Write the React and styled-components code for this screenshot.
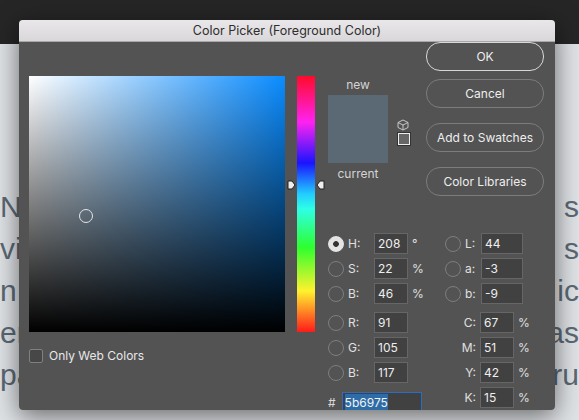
import React from 'react';
import styled, { createGlobalStyle } from 'styled-components';

const Global = createGlobalStyle`
  html, body { margin: 0; padding: 0; }
  body { width: 579px; height: 420px; overflow: hidden; background: #e0e3e6; font-family: Inter, "Liberation Sans", sans-serif; }
`;

const Page = styled.div`
  position: relative;
  width: 579px;
  height: 420px;
  overflow: hidden;
`;

const TopBar = styled.div`
  height: 44px;
  background: #262626;
`;

const BackText = styled.div`
  padding-top: 142px;
  display: flex;
  flex-direction: column;
`;

const BackLine = styled.div`
  height: 42px;
  display: flex;
  justify-content: space-between;
  font-family: "Liberation Sans", sans-serif;
  font-size: 30px;
  line-height: 42px;
  color: #5b6975;
  white-space: nowrap;
  padding: 0 0 0 0;
`;

const Dialog = styled.div`
  position: absolute;
  left: 19px;
  top: 20px;
  width: 536px;
  height: 390px;
  background: #535353;
  border-radius: 4px;
  overflow: hidden;
  display: flex;
  flex-direction: column;
`;

const DialogShadow = styled.div`
  position: absolute;
  left: 19px;
  top: 20px;
  width: 536px;
  height: 390px;
  border-radius: 4px;
  box-shadow: 0 6px 26px rgba(0, 0, 0, 0.55);
`;

const TitleBar = styled.div`
  height: 21px;
  flex: none;
  background: linear-gradient(#e9e7e9, #d9d7d9);
  border-bottom: 1px solid #a9a9a9;
  color: #2e2e2e;
  font-size: 12.5px;
  line-height: 22px;
  text-align: center;
`;

const Body = styled.div`
  flex: 1;
  display: flex;
  padding: 10px 10px 0 10px;
`;

const LeftCol = styled.div`
  width: 256px;
  padding-top: 24px;
  display: flex;
  flex-direction: column;
`;

const Field2D = styled.div`
  position: relative;
  width: 256px;
  height: 256px;
  background:
    linear-gradient(to bottom, rgba(0, 0, 0, 0), #000),
    linear-gradient(to right, #fff, #0a8cff);
`;

const Handle = styled.div`
  position: absolute;
  left: 50px;
  top: 133px;
  width: 12px;
  height: 12px;
  border-radius: 50%;
  border: 1px solid #e6e6e6;
  box-sizing: content-box;
`;

const CheckRow = styled.label`
  margin-top: 16px;
  display: flex;
  align-items: center;
  gap: 6px;
  color: #e8e8e8;
  font-size: 12px;
`;

const CheckBox = styled.span`
  width: 12px;
  height: 12px;
  border: 1px solid #808080;
  border-radius: 2px;
  background: #474747;
`;

const HueCol = styled.div`
  position: relative;
  width: 19px;
  height: 256px;
  margin: 24px 0 0 12px;
  background: linear-gradient(
    to bottom,
    #ff0a2a 0%,
    #ff22f0 18%,
    #1a14ff 34%,
    #22ccff 46%,
    #2effe6 52%,
    #2eff2e 67%,
    #fff22e 84%,
    #ff1a1a 100%
  );
`;

const Marker = styled.svg`
  position: absolute;
  top: 104px;
  ${(p) => (p.$side === 'left' ? 'left: -10px;' : 'right: -10px;')}
`;

const RightCol = styled.div`
  margin-left: 13px;
  display: flex;
  flex-direction: column;
`;

const TopRow = styled.div`
  display: flex;
  height: 179px;
`;

const PreviewCol = styled.div`
  width: 98px;
  padding-top: 25px;
  display: flex;
`;

const Preview = styled.div`
  width: 60px;
  display: flex;
  flex-direction: column;
  align-items: center;
  color: #d4d4d4;
  font-size: 12px;
  line-height: 16px;
`;

const Swatch = styled.div`
  width: 60px;
  height: 68px;
  margin: 2px 0 3px;
  background: #5b6975;
`;

const GamutIcons = styled.div`
  margin: 42px 0 0 9px;
  display: flex;
  flex-direction: column;
  gap: 2px;
`;

const WebSwatch = styled.div`
  width: 10px;
  height: 10px;
  background: #676767;
  border: 1px solid #eee;
  outline: 1px solid #333;
  margin-left: 1px;
`;

const Buttons = styled.div`
  width: 118px;
  padding-top: -10px;
  margin-top: -10px;
  display: flex;
  flex-direction: column;
`;

const Btn = styled.div`
  height: 27px;
  margin-top: ${(p) => p.$gap}px;
  border-radius: 14px;
  border: 1px solid ${(p) => (p.$primary ? '#d8d8d8' : '#7c7c7c')};
  color: #eee;
  font-size: 12px;
  line-height: 27px;
  text-align: center;
`;

const Fields = styled.div`
  display: flex;
`;

const FieldCol = styled.div`
  width: ${(p) => p.$w}px;
  display: flex;
  flex-direction: column;
`;

const Row = styled.div`
  height: 25px;
  margin-top: ${(p) => p.$gap || 0}px;
  display: flex;
  align-items: center;
`;

const Radio = styled.span`
  width: 14px;
  height: 14px;
  border-radius: 50%;
  flex: none;
  box-sizing: content-box;
  ${(p) =>
    p.$on
      ? 'background: radial-gradient(circle, #333 0 2.5px, #e4e4e4 3.2px); border: 1px solid #e4e4e4;'
      : 'border: 1px solid #7e7e7e;'}
`;

const Label = styled.span`
  width: ${(p) => p.$w || 30}px;
  flex: none;
  padding-left: ${(p) => (p.$flush ? 0 : 4)}px;
  text-align: ${(p) => (p.$flush ? 'right' : 'left')};
  padding-right: ${(p) => (p.$flush ? 4 : 0)}px;
  color: #e0e0e0;
  font-size: 12px;
  box-sizing: border-box;
`;

const Input = styled.span`
  width: ${(p) => p.$w}px;
  height: 21px;
  box-sizing: border-box;
  flex: none;
  padding-left: 3px;
  background: #414141;
  border: 1px solid #666;
  color: #eee;
  font-size: 12px;
  line-height: 19px;
`;

const Unit = styled.span`
  margin-left: 4px;
  color: #e0e0e0;
  font-size: 12px;
`;

const HexRow = styled.div`
  margin-top: 7px;
  height: 21px;
  display: flex;
  align-items: center;
  color: #d8d8d8;
  font-size: 12px;
  gap: 6px;
`;

const HexInput = styled.span`
  width: 80px;
  height: 21px;
  box-sizing: border-box;
  padding: 1px 0 0 2px;
  background: #414141;
  border: 1px solid #2c6cc4;
  line-height: 17px;
`;

const Selected = styled.span`
  display: inline-block;
  background: #2e6ca8;
  color: #f2f2f2;
`;

const hsb = [
  ['H:', '208', '°', true],
  ['S:', '22', '%'],
  ['B:', '46', '%'],
];
const rgb = [
  ['R:', '91'],
  ['G:', '105'],
  ['B:', '117'],
];
const lab = [
  ['L:', '44'],
  ['a:', '-3'],
  ['b:', '-9'],
];
const cmyk = [
  ['C:', '67'],
  ['M:', '51'],
  ['Y:', '42'],
  ['K:', '15'],
];
const backLines = [
  ['N', 's'],
  ['vic', 's'],
  ['n', 'ic'],
  ['en', 'as'],
  ['pa', 'ru'],
];

export default function App() {
  return (
    <Page>
      <Global />
      <TopBar />
      <BackText>
        {backLines.map(([l, r], i) => (
          <BackLine key={i}>
            <span>{l}</span>
            <span>{r}</span>
          </BackLine>
        ))}
      </BackText>
      <DialogShadow />
      <Dialog>
        <TitleBar>Color Picker (Foreground Color)</TitleBar>
        <Body>
          <LeftCol>
            <Field2D>
              <Handle />
            </Field2D>
            <CheckRow>
              <CheckBox />
              Only Web Colors
            </CheckRow>
          </LeftCol>
          <HueCol>
            <Marker $side="left" width="9" height="10" viewBox="0 0 9 10">
              <path d="M1 1 L5 1 L8 5 L5 9 L1 9 Z" fill="#eee" stroke="#222" />
            </Marker>
            <Marker $side="right" width="9" height="10" viewBox="0 0 9 10">
              <path d="M8 1 L4 1 L1 5 L4 9 L8 9 Z" fill="#eee" stroke="#222" />
            </Marker>
          </HueCol>
          <RightCol>
            <TopRow>
              <PreviewCol>
                <Preview>
                  new
                  <Swatch />
                  current
                </Preview>
                <GamutIcons>
                  <svg width="12" height="12" viewBox="0 0 12 12" fill="none" stroke="#c8c8c8">
                    <path d="M6 1 L11 3.5 L11 8.5 L6 11 L1 8.5 L1 3.5 Z M1 3.5 L6 6 L11 3.5 M6 6 L6 11" />
                  </svg>
                  <WebSwatch />
                </GamutIcons>
              </PreviewCol>
              <Buttons>
                <Btn $primary $gap={0}>OK</Btn>
                <Btn $gap={8}>Cancel</Btn>
                <Btn $gap={15}>Add to Swatches</Btn>
                <Btn $gap={15}>Color Libraries</Btn>
              </Buttons>
            </TopRow>
            <Fields>
              <FieldCol $w={117}>
                {hsb.map(([l, v, u, on]) => (
                  <Row key={l}>
                    <Radio $on={on} />
                    <Label>{l}</Label>
                    <Input $w={34}>{v}</Input>
                    <Unit>{u}</Unit>
                  </Row>
                ))}
                {rgb.map(([l, v], i) => (
                  <Row key={l} $gap={i === 0 ? 4 : 0}>
                    <Radio />
                    <Label>{l}</Label>
                    <Input $w={34}>{v}</Input>
                  </Row>
                ))}
                <HexRow>
                  #
                  <HexInput>
                    <Selected>5b6975</Selected>
                  </HexInput>
                </HexRow>
              </FieldCol>
              <FieldCol $w={100}>
                {lab.map(([l, v]) => (
                  <Row key={l}>
                    <Radio />
                    <Label $w={20}>{l}</Label>
                    <Input $w={42}>{v}</Input>
                  </Row>
                ))}
                {cmyk.map(([l, v], i) => (
                  <Row key={l} $gap={i === 0 ? 4 : 0}>
                    <Label $flush $w={35}>{l}</Label>
                    <Input $w={34}>{v}</Input>
                    <Unit>%</Unit>
                  </Row>
                ))}
              </FieldCol>
            </Fields>
          </RightCol>
        </Body>
      </Dialog>
    </Page>
  );
}
